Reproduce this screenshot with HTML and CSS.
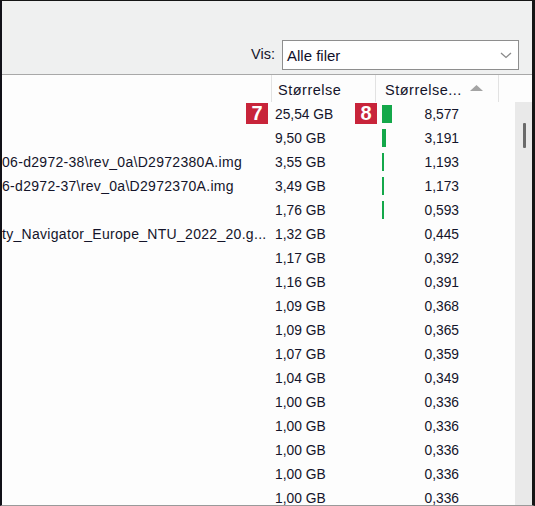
FILE: index.html
```html
<!DOCTYPE html>
<html lang="no">
<head>
<meta charset="utf-8">
<link rel="stylesheet" href="styles.css">
</head>
<body>
<div class="window">
  <div class="toolbar">
    <span class="vis-label">Vis:</span>
    <div class="combo">
      <span class="combo-text">Alle filer</span>
      <svg class="chev" width="12" height="7" viewBox="0 0 12 7"><polyline points="1,1 6,5.5 11,1" fill="none" stroke="#8a8a8a" stroke-width="1.3"/></svg>
    </div>
  </div>
  <div class="header">
    <div class="hcell hname"></div>
    <div class="hcell hsize">Størrelse</div>
    <div class="hcell hpct"><span>Størrelse...</span><svg class="sort" width="13" height="6" viewBox="0 0 13 6"><polygon points="0,6 6.5,0 13,6" fill="#a4a4a4"/></svg></div>
    <div class="hcell hrest"></div>
  </div>
  <div class="body">
    <div class="rows">
      <div class="row"><div class="name"></div><div class="size">25,54 GB</div><div class="pct"><i class="bar" style="width:10px"></i><span>8,577</span></div></div>
      <div class="row"><div class="name"></div><div class="size">9,50 GB</div><div class="pct"><i class="bar" style="width:4px"></i><span>3,191</span></div></div>
      <div class="row"><div class="name">06-d2972-38\rev_0a\D2972380A.img</div><div class="size">3,55 GB</div><div class="pct"><i class="bar" style="width:1.5px"></i><span>1,193</span></div></div>
      <div class="row"><div class="name">6-d2972-37\rev_0a\D2972370A.img</div><div class="size">3,49 GB</div><div class="pct"><i class="bar" style="width:1.5px"></i><span>1,173</span></div></div>
      <div class="row"><div class="name"></div><div class="size">1,76 GB</div><div class="pct"><i class="bar" style="width:1.5px"></i><span>0,593</span></div></div>
      <div class="row"><div class="name">ty_Navigator_Europe_NTU_2022_20.g...</div><div class="size">1,32 GB</div><div class="pct"><span>0,445</span></div></div>
      <div class="row"><div class="name"></div><div class="size">1,17 GB</div><div class="pct"><span>0,392</span></div></div>
      <div class="row"><div class="name"></div><div class="size">1,16 GB</div><div class="pct"><span>0,391</span></div></div>
      <div class="row"><div class="name"></div><div class="size">1,09 GB</div><div class="pct"><span>0,368</span></div></div>
      <div class="row"><div class="name"></div><div class="size">1,09 GB</div><div class="pct"><span>0,365</span></div></div>
      <div class="row"><div class="name"></div><div class="size">1,07 GB</div><div class="pct"><span>0,359</span></div></div>
      <div class="row"><div class="name"></div><div class="size">1,04 GB</div><div class="pct"><span>0,349</span></div></div>
      <div class="row"><div class="name"></div><div class="size">1,00 GB</div><div class="pct"><span>0,336</span></div></div>
      <div class="row"><div class="name"></div><div class="size">1,00 GB</div><div class="pct"><span>0,336</span></div></div>
      <div class="row"><div class="name"></div><div class="size">1,00 GB</div><div class="pct"><span>0,336</span></div></div>
      <div class="row"><div class="name"></div><div class="size">1,00 GB</div><div class="pct"><span>0,336</span></div></div>
      <div class="row"><div class="name"></div><div class="size">1,00 GB</div><div class="pct"><span>0,336</span></div></div>
    </div>
    <div class="scrollbar"><div class="thumb"></div></div>
  </div>
  <div class="badge badge-7">7</div>
  <div class="badge badge-8">8</div>
</div>
</body>
</html>
```
FILE: styles.css
```css
html, body {
  margin: 0;
  padding: 0;
  background: #fdfdfd;
}
body {
  width: 535px;
  height: 506px;
  overflow: hidden;
  font-family: "Liberation Sans", Arial, sans-serif;
  color: #14142a;
}
.window {
  position: relative;
  box-sizing: border-box;
  width: 535px;
  height: 506px;
  border-top: 1px solid #151515;
  border-left: 2px solid #111118;
  border-right: 3px solid #151515;
  border-bottom: 1px solid #9a9a9a;
  display: flex;
  flex-direction: column;
  overflow: hidden;
  background: #fdfdfd;
}
.toolbar {
  height: 74px;
  flex: none;
  box-sizing: border-box;
  background: #eff0f0;
  border-bottom: 1px solid #a8a8a8;
  display: flex;
  justify-content: flex-end;
  align-items: flex-end;
  padding: 0 13px 4px 0;
  gap: 7px;
}
.vis-label {
  font-size: 14.5px;
  line-height: 30px;
  padding-bottom: 1px;
}
.combo {
  width: 237px;
  height: 30px;
  box-sizing: border-box;
  border: 1px solid #8e8e8e;
  background: #fff;
  display: flex;
  align-items: center;
  justify-content: space-between;
  padding: 0 6px 0 4px;
}
.combo-text {
  font-size: 15px;
  color: #10102a;
}
.chev {
  display: block;
  margin-top: 1px;
}
.header {
  height: 27px;
  flex: none;
  display: flex;
  background: #fdfdfd;
}
.hcell {
  box-sizing: border-box;
  border-right: 1px solid #e2e2e2;
  font-size: 14.5px;
  letter-spacing: 0.5px;
  display: flex;
  align-items: center;
  padding-top: 2px;
}
.hname { width: 270px; }
.hsize { width: 104px; padding-left: 6px; }
.hpct { width: 123px; padding-left: 9px; gap: 8px; }
.hpct .sort { margin-top: -4px; }
.hrest { flex: 1; border-right: none; }
.body {
  flex: 1;
  display: flex;
  min-height: 0;
}
.rows {
  flex: 1;
  display: flex;
  flex-direction: column;
}
.row {
  height: 24px;
  flex: none;
  display: flex;
  align-items: center;
}
.name {
  width: 270px;
  overflow: hidden;
  white-space: nowrap;
  font-size: 14px;
  letter-spacing: 0.3px;
}
.size {
  width: 104px;
  box-sizing: border-box;
  padding-left: 3px;
  font-size: 13.8px;
}
.pct {
  width: 122px;
  box-sizing: border-box;
  padding: 0 39px 0 6px;
  display: flex;
  align-items: center;
  font-size: 13.8px;
  height: 24px;
}
.pct span {
  margin-left: auto;
}
.bar {
  display: block;
  height: 18px;
  background: #14a84a;
}
.scrollbar {
  width: 17px;
  flex: none;
  background: #e9e9e9;
}
.thumb {
  margin: 21px 0 0 8px;
  width: 3px;
  height: 25px;
  background: #6a6a6a;
  border-radius: 1px;
}
.badge {
  position: absolute;
  top: 102px;
  width: 22px;
  height: 21px;
  background: #c8243a;
  color: #fff;
  font-family: "Liberation Sans", Arial, sans-serif;
  font-weight: bold;
  font-size: 20px;
  line-height: 21px;
  text-align: center;
}
.badge-7 { left: 244px; }
.badge-8 { left: 353px; }
```
